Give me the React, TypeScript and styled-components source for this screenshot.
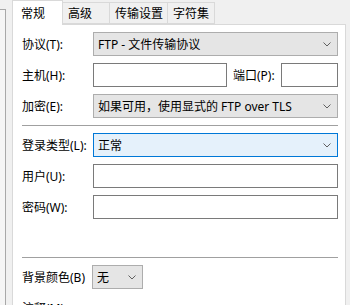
import styled, { createGlobalStyle } from "styled-components";

const GlobalStyle = createGlobalStyle`
  html, body {
    margin: 0;
    padding: 0;
    background: #f0f0f0;
  }
  * {
    box-sizing: border-box;
  }
`

const Page = styled.div`
  width: 350px;
  height: 305px;
  overflow: hidden;
  display: flex;
  gap: 6px;
  background: #f0f0f0;
  font-family: "Noto Sans", "Noto Sans CJK SC", "Liberation Sans", sans-serif;
  font-size: 12px;
  color: #000;
`

const SidePane = styled.div`
  width: 6px;
  margin-top: 9px;
  background: #f5f5f5;
  border-top: 1px solid #a8a8a8;
  border-right: 1px solid #a8a8a8;
`

const TabControl = styled.div`
  flex: 1;
  margin-right: 4px;
  display: flex;
  flex-direction: column;
`

const TabStrip = styled.div`
  height: 27px;
  display: flex;
  align-items: flex-end;
  position: relative;
  z-index: 1;
`

const Tab = styled.div<{ $active?: boolean; $w: number }>`
  width: ${(p) => p.$w}px;
  height: ${(p) => (p.$active ? 25 : 22)}px;
  margin-bottom: ${(p) => (p.$active ? -1 : 0)}px;
  padding-left: ${(p) => (p.$active ? 8 : 5)}px;
  display: flex;
  align-items: center;
  background: ${(p) => (p.$active ? "#fff" : "#f0f0f0")};
  border: 1px solid #d9d9d9;
  border-bottom: ${(p) => (p.$active ? "none" : "1px solid #d9d9d9")};
  margin-left: -1px;
  &:first-child {
    margin-left: 0;
  }
`

const Panel = styled.div`
  flex: 1;
  background: #fff;
  border: 1px solid #d9d9d9;
  padding: 7px 7px 0 9px;
  display: flex;
  flex-direction: column;
  gap: 7px;
`

const Row = styled.div`
  display: flex;
  align-items: center;
  height: 24px;
  flex-shrink: 0;
`

const Label = styled.div<{ $w?: number; $pad?: number }>`
  width: ${(p) => p.$w ?? 71}px;
  padding-left: ${(p) => p.$pad ?? 0}px;
  flex-shrink: 0;
  white-space: nowrap;
`

const Combo = styled.div<{ $focus?: boolean; $w?: number }>`
  ${(p) => (p.$w ? `width: ${p.$w}px;` : "flex: 1;")}
  height: 24px;
  display: flex;
  align-items: center;
  justify-content: space-between;
  padding: 0 6px 0 4px;
  background: ${(p) => (p.$focus ? "#e5f1fb" : "#e5e5e5")};
  border: 1px solid ${(p) => (p.$focus ? "#0078d7" : "#adadad")};
  white-space: nowrap;
`

const Input = styled.div<{ $w?: number }>`
  ${(p) => (p.$w ? `width: ${p.$w}px;` : "flex: 1;")}
  height: 24px;
  background: #fff;
  border: 1px solid #7a7a7a;
`

const Separator = styled.div<{ $top?: number }>`
  height: 1px;
  flex-shrink: 0;
  background: #a0a0a0;
  margin-top: ${(p) => p.$top ?? 0}px;
`

const Chevron = () => (
  <svg width="8" height="5" viewBox="0 0 8 5">
    <polyline points="0.5,0.5 4,4 7.5,0.5" fill="none" stroke="#606060" strokeWidth="1" />
  </svg>
)

export default function App() {
  return (
    <>
      <GlobalStyle />
      <Page>
        <SidePane />
        <TabControl>
          <TabStrip>
            <Tab $active $w={51}>常规</Tab>
            <Tab $w={48}>高级</Tab>
            <Tab $w={59}>传输设置</Tab>
            <Tab $w={48}>字符集</Tab>
          </TabStrip>
          <Panel>
            <Row>
              <Label>协议(T):</Label>
              <Combo>
                <span>FTP - 文件传输协议</span>
                <Chevron />
              </Combo>
            </Row>
            <Row>
              <Label>主机(H):</Label>
              <Input $w={134} />
              <Label $w={54} $pad={6}>端口(P):</Label>
              <Input />
            </Row>
            <Row>
              <Label>加密(E):</Label>
              <Combo>
                <span>如果可用，使用显式的 FTP over TLS</span>
                <Chevron />
              </Combo>
            </Row>
            <Separator />
            <Row>
              <Label>登录类型(L):</Label>
              <Combo $focus>
                <span>正常</span>
                <Chevron />
              </Combo>
            </Row>
            <Row>
              <Label>用户(U):</Label>
              <Input />
            </Row>
            <Row>
              <Label>密码(W):</Label>
              <Input />
            </Row>
            <Separator $top={31} />
            <Row>
              <Label $w={70}>背景颜色(B)</Label>
              <Combo $w={51}>
                <span>无</span>
                <Chevron />
              </Combo>
            </Row>
            <Row>
              <Label>注释(M):</Label>
            </Row>
          </Panel>
        </TabControl>
      </Page>
    </>
  )
}
